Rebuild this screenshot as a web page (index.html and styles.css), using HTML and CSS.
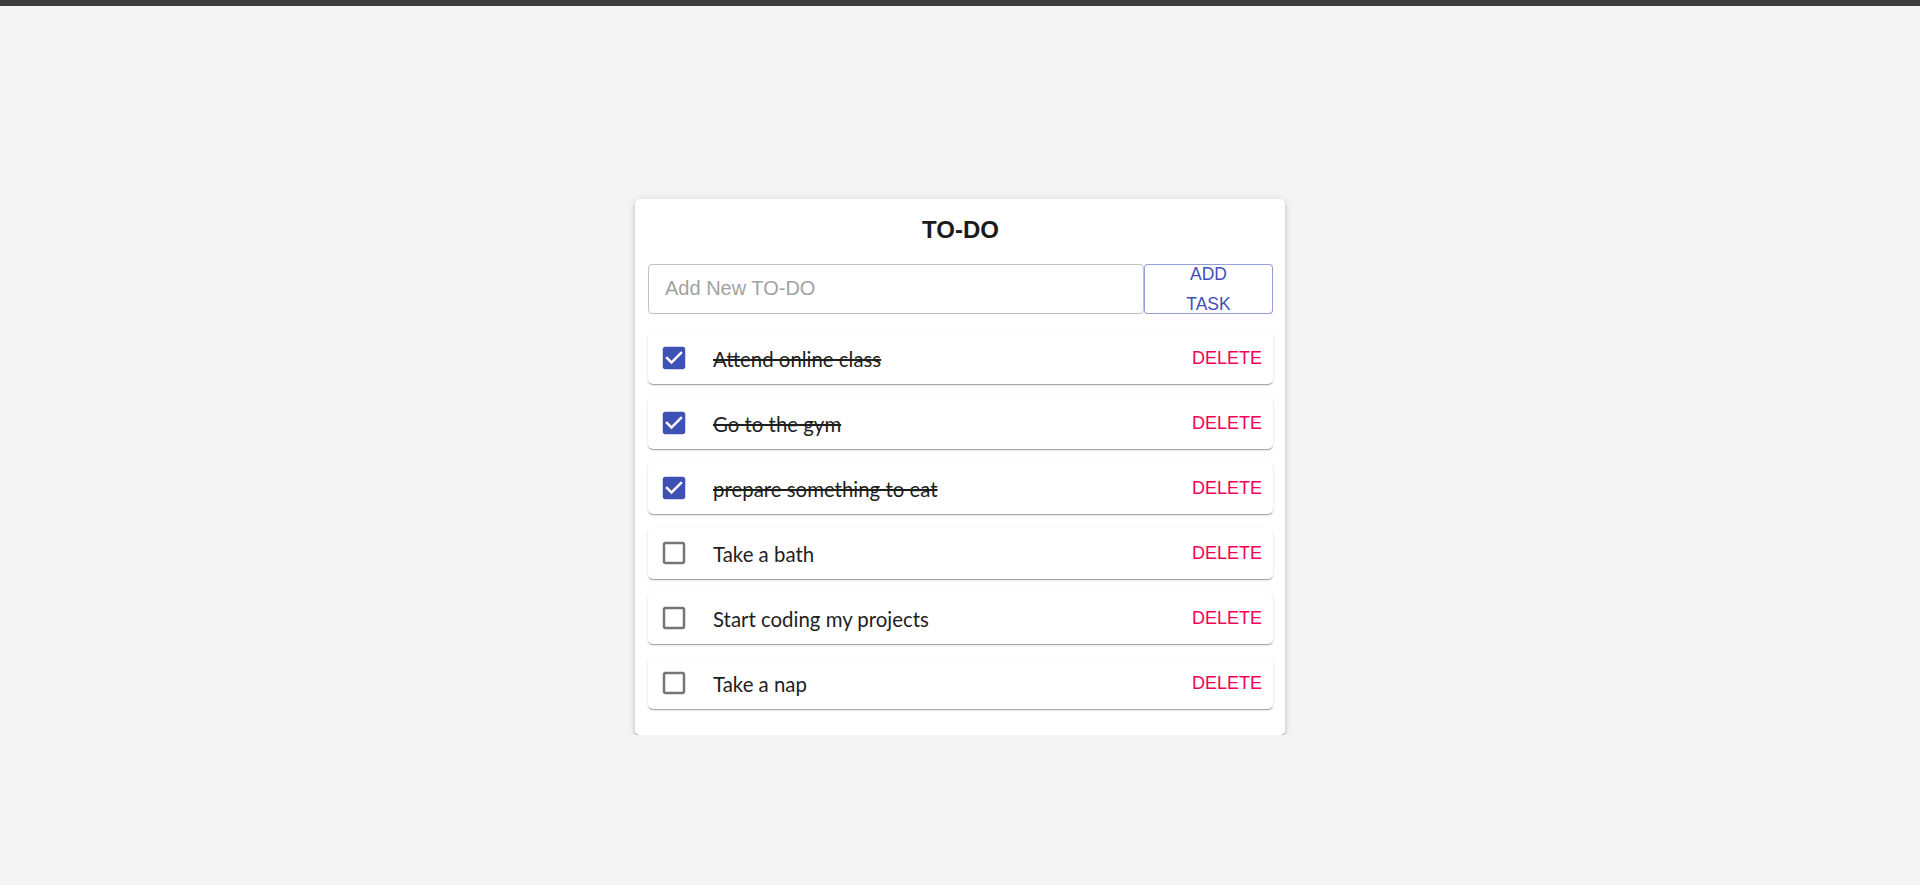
FILE: index.html
```html
<!DOCTYPE html>
<html lang="en">
<head>
<meta charset="utf-8">
<title>TO-DO</title>
<link rel="stylesheet" href="styles.css">
</head>
<body>
<div class="topbar"></div>
<main class="page">
  <section class="card">
    <h1 class="title">TO-DO</h1>
    <form class="add-row">
      <input class="add-input" type="text" placeholder="Add New TO-DO">
      <button class="add-btn" type="button"><span>ADD</span><span>TASK</span></button>
    </form>
    <ul class="list">
      <li class="item done">
        <svg class="cb checked" viewBox="0 0 24 24"><path d="M19 3H5c-1.11 0-2 .9-2 2v14c0 1.1.89 2 2 2h14c1.11 0 2-.9 2-2V5c0-1.1-.89-2-2-2zm-9 14l-5-5 1.41-1.41L10 14.170l7.59-7.59L19 8l-9 9z"/></svg>
        <span class="text">Attend online class</span>
        <button class="del" type="button">DELETE</button>
      </li>
      <li class="item done">
        <svg class="cb checked" viewBox="0 0 24 24"><path d="M19 3H5c-1.11 0-2 .9-2 2v14c0 1.1.89 2 2 2h14c1.11 0 2-.9 2-2V5c0-1.1-.89-2-2-2zm-9 14l-5-5 1.41-1.41L10 14.17l7.59-7.59L19 8l-9 9z"/></svg>
        <span class="text">Go to the gym</span>
        <button class="del" type="button">DELETE</button>
      </li>
      <li class="item done">
        <svg class="cb checked" viewBox="0 0 24 24"><path d="M19 3H5c-1.11 0-2 .9-2 2v14c0 1.1.89 2 2 2h14c1.11 0 2-.9 2-2V5c0-1.1-.89-2-2-2zm-9 14l-5-5 1.41-1.41L10 14.17l7.59-7.59L19 8l-9 9z"/></svg>
        <span class="text">prepare something to eat</span>
        <button class="del" type="button">DELETE</button>
      </li>
      <li class="item">
        <svg class="cb" viewBox="0 0 24 24"><path d="M19 5v14H5V5h14m0-2H5c-1.1 0-2 .9-2 2v14c0 1.1.9 2 2 2h14c1.1 0 2-.9 2-2V5c0-1.1-.9-2-2-2z"/></svg>
        <span class="text">Take a bath</span>
        <button class="del" type="button">DELETE</button>
      </li>
      <li class="item">
        <svg class="cb" viewBox="0 0 24 24"><path d="M19 5v14H5V5h14m0-2H5c-1.1 0-2 .9-2 2v14c0 1.1.9 2 2 2h14c1.1 0 2-.9 2-2V5c0-1.1-.9-2-2-2z"/></svg>
        <span class="text">Start coding my projects</span>
        <button class="del" type="button">DELETE</button>
      </li>
      <li class="item">
        <svg class="cb" viewBox="0 0 24 24"><path d="M19 5v14H5V5h14m0-2H5c-1.1 0-2 .9-2 2v14c0 1.1.9 2 2 2h14c1.1 0 2-.9 2-2V5c0-1.1-.9-2-2-2z"/></svg>
        <span class="text">Take a nap</span>
        <button class="del" type="button">DELETE</button>
      </li>
    </ul>
  </section>
</main>
</body>
</html>
```

FILE: styles.css
```css
html, body {
  margin: 0;
  padding: 0;
  background: #f4f4f4;
  font-family: "Liberation Sans", Arial, sans-serif;
}

.topbar {
  height: 6px;
  background: #3d3d3d;
}

.page {
  display: flex;
  justify-content: center;
  padding-top: 193px;
}

.card {
  box-sizing: border-box;
  width: 650px;
  background: #fff;
  border-radius: 5px;
  padding: 17px 12px 26px 13px;
  box-shadow: 0 3px 3px -2px rgba(0,0,0,0.2), 0 3px 4px 0 rgba(0,0,0,0.14), 0 1px 8px 0 rgba(0,0,0,0.12);
}

.title {
  margin: 0;
  text-align: center;
  font-family: "Liberation Sans", Arial, sans-serif;
  font-weight: 700;
  font-size: 24px;
  line-height: 28px;
  color: #1a1a1a;
}

.add-row {
  display: flex;
  margin: 20px 0 0;
  height: 50px;
}

.add-input {
  box-sizing: border-box;
  flex: 1;
  height: 50px;
  margin: 0;
  border: 1px solid #c2c2c2;
  border-radius: 4px;
  padding: 0 16px 1px;
  font-family: "Liberation Sans", Arial, sans-serif;
  font-size: 20px;
  color: #222;
  outline: none;
  background: #fff;
}

.add-input::placeholder {
  color: #a2a2a2;
}

.add-btn {
  box-sizing: border-box;
  width: 129px;
  height: 50px;
  margin: 0;
  padding: 0 0 1px;
  border: 1px solid rgba(63, 81, 181, 0.55);
  border-radius: 4px;
  background: #fff;
  color: #3f51b5;
  font-family: "Liberation Sans", Arial, sans-serif;
  font-size: 17.5px;
  line-height: 30px;
  display: flex;
  flex-direction: column;
  align-items: center;
  justify-content: center;
}

.list {
  list-style: none;
  margin: 18px 0 0;
  padding: 0;
  display: flex;
  flex-direction: column;
  gap: 13px;
}

.item {
  display: flex;
  align-items: center;
  height: 52px;
  background: #fff;
  border-radius: 5px;
  padding: 0 11px 0 11px;
  box-shadow: 0 2px 1px -1px rgba(0,0,0,0.2), 0 1px 1px 0 rgba(0,0,0,0.14), 0 1px 3px 0 rgba(0,0,0,0.12);
}

.cb {
  width: 30px;
  height: 30px;
  flex: none;
  fill: rgba(0, 0, 0, 0.54);
}

.cb.checked {
  fill: #3f51b5;
}

.text {
  flex: 1;
  margin-left: 24px;
  padding-top: 2px;
  font-family: Lato, "Noto Sans", sans-serif;
  font-size: 20.4px;
  color: #1e1e1e;
}

.done .text {
  text-decoration: line-through;
  text-decoration-thickness: 1.6px;
}

.del {
  border: 0;
  background: transparent;
  padding: 0;
  color: #f50057;
  font-family: "Liberation Sans", Arial, sans-serif;
  font-size: 18px;
  cursor: pointer;
}
```
